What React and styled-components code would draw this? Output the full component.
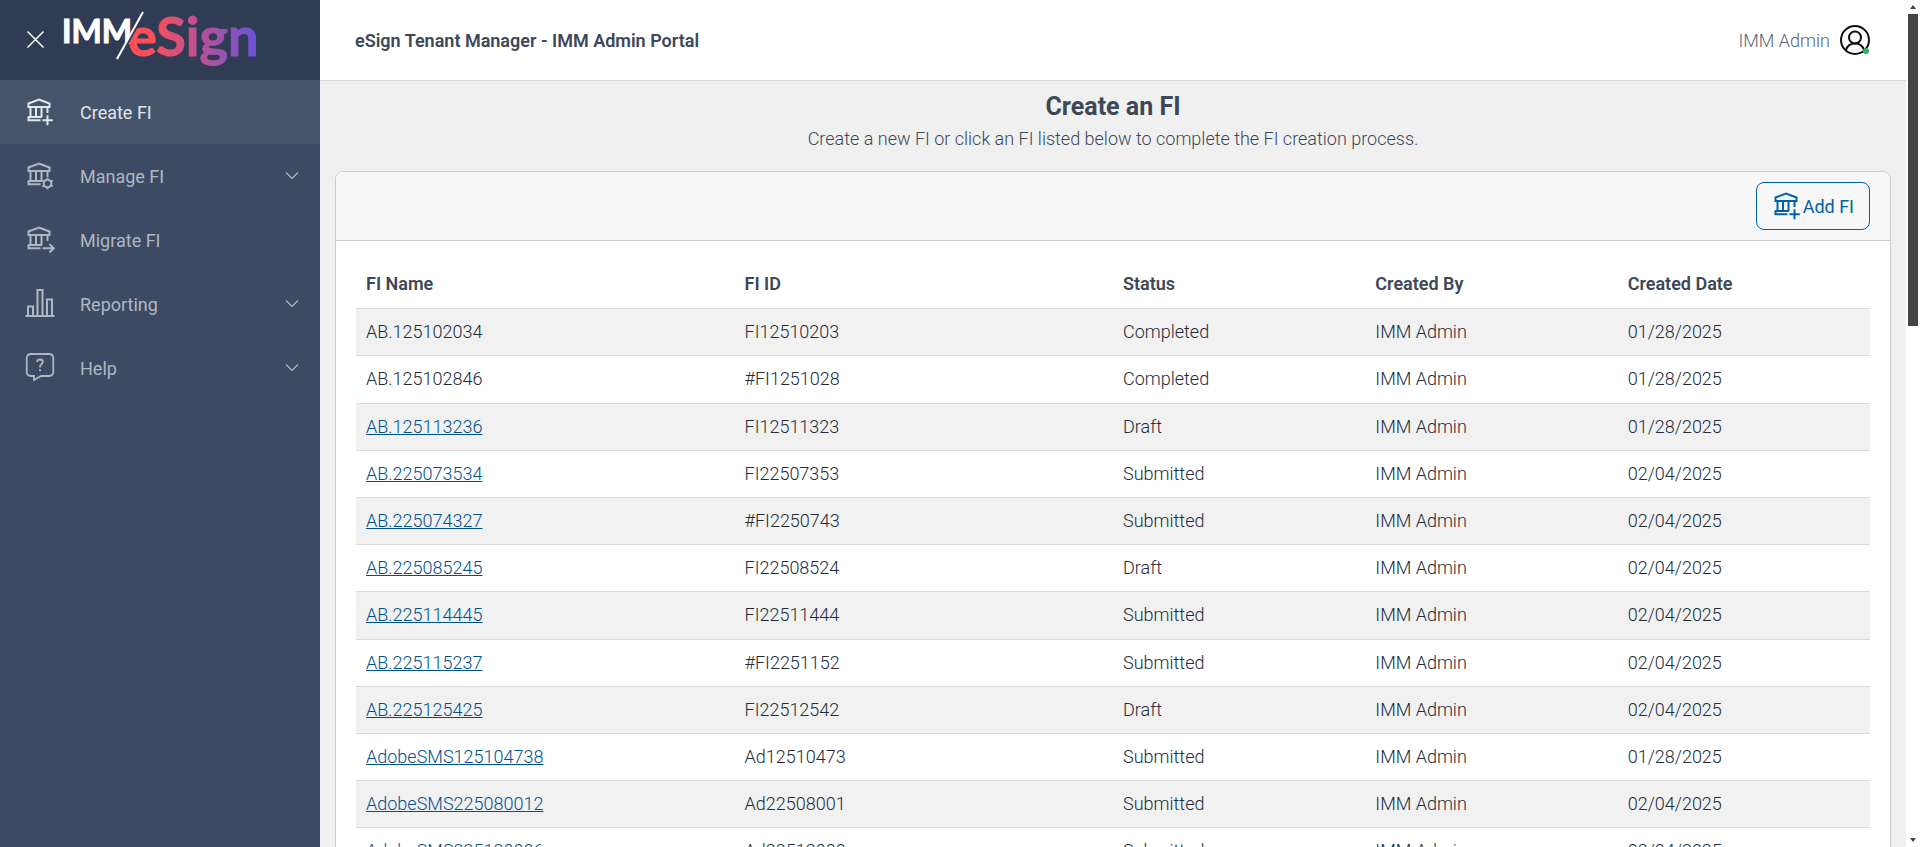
import React from 'react';
import styled, { createGlobalStyle } from 'styled-components';

const GlobalStyle = createGlobalStyle`
  * {
    box-sizing: border-box;
  }

  body {
    margin: 0;
    font-family: Roboto, sans-serif;
    font-size: 18px;
    color: #3c4858;
    background: #f0f0f0;
    overflow: hidden;
  }
`;

const Layout = styled.div`
  display: flex;
  height: 100vh;
  overflow: hidden;
`;

const Sidebar = styled.aside`
  flex: none;
  width: 320px;
  background: #3c4b63;
`;

const Brand = styled.div`
  display: flex;
  align-items: center;
  height: 80px;
  padding-left: 26px;
  background: #303c54;
`;

const CloseButton = styled.button`
  display: flex;
  padding: 0;
  border: none;
  background: none;
`;

const LogoSvg = styled.svg`
  margin-left: 16px;
`;

const LogoText = styled.text`
  font-family: Lato, sans-serif;
  font-weight: 700;
  stroke-width: 1;
`;

const NavItem = styled.a`
  display: flex;
  align-items: center;
  height: 64px;
  padding: 0 20px 0 24px;
  color: ${(props) => (props.$active ? '#e3e6ea' : '#b1b7c1')};
  background: ${(props) => (props.$active ? '#46546b' : 'transparent')};
  text-decoration: none;
`;

const NavLabel = styled.span`
  flex: 1;
  margin-left: 24px;
`;

const Main = styled.main`
  flex: 1;
  min-width: 0;
  overflow: hidden;
`;

const Header = styled.header`
  display: flex;
  align-items: center;
  justify-content: space-between;
  height: 81px;
  padding: 0 35px;
  background: #ffffff;
  border-bottom: 1px solid #d8dbe0;
`;

const HeaderTitle = styled.div`
  font-weight: 600;
`;

const UserButton = styled.button`
  display: flex;
  align-items: center;
  gap: 9px;
  padding: 0;
  border: none;
  background: none;
  font-family: inherit;
  font-size: 18px;
  font-weight: 300;
  color: #5c6675;
`;

const Intro = styled.div`
  padding: 10px 16px 18px;
  text-align: center;
`;

const PageTitle = styled.h1`
  margin: 0;
  font-size: 25px;
  line-height: 32px;
  font-weight: 700;
`;

const Subtitle = styled.p`
  margin: 2px 0 0;
  font-size: 18px;
  line-height: 28px;
  font-weight: 300;
`;

const Card = styled.section`
  margin: 0 15px;
  background: #ffffff;
  border: 1px solid #cccccc;
  border-radius: 8px;
  overflow: hidden;
`;

const CardHeader = styled.div`
  display: flex;
  justify-content: flex-end;
  padding: 10px 20px;
  background: #f7f7f7;
  border-bottom: 1px solid #cccccc;
`;

const AddButton = styled.button`
  display: flex;
  align-items: center;
  height: 48px;
  padding: 0 15px 0 14px;
  border: 1px solid #0061aa;
  border-radius: 8px;
  background: transparent;
  font-family: inherit;
  font-size: 18px;
  color: #0061aa;
`;

const CardBody = styled.div`
  padding: 20px;
`;

const Table = styled.table`
  width: 100%;
  border-collapse: collapse;
  table-layout: fixed;
  line-height: 1.455;
`;

const Th = styled.th`
  width: ${(props) => props.$width};
  padding: 10px 10px 11px;
  text-align: left;
  font-weight: 600;
`;

const Tr = styled.tr`
  border-top: 1px solid #d8dbe0;

  &:nth-child(odd) {
    background: #f1f1f1;
  }
`;

const Td = styled.td`
  padding: 10px;
  font-weight: 300;
  color: #222c3a;
`;

const FiLink = styled.a`
  color: #00508f;
  text-decoration: underline;
`;

const Scrollbar = styled.div`
  display: flex;
  flex-direction: column;
  align-items: center;
  justify-content: space-between;
  flex: none;
  width: 14px;
  padding: 5px 2px;
  background: #ffffff;
`;

const Thumb = styled.div`
  width: 10px;
  height: 312px;
  margin: 5px 0 auto;
  background: #444444;
`;

const Arrow = styled.div`
  border: 3px solid transparent;
  border-top: ${(props) => (props.$down ? '4px solid #444444' : '0')};
  border-bottom: ${(props) => (props.$down ? '0' : '4px solid #444444')};
`;

const columns = [
  ['FI Name', '25%'],
  ['FI ID', '25%'],
  ['Status', 'auto'],
  ['Created By', 'auto'],
  ['Created Date', 'auto'],
];

const rows = [
  ['AB.125102034', 'FI12510203', 'Completed', '01/28/2025'],
  ['AB.125102846', '#FI1251028', 'Completed', '01/28/2025'],
  ['AB.125113236', 'FI12511323', 'Draft', '01/28/2025'],
  ['AB.225073534', 'FI22507353', 'Submitted', '02/04/2025'],
  ['AB.225074327', '#FI2250743', 'Submitted', '02/04/2025'],
  ['AB.225085245', 'FI22508524', 'Draft', '02/04/2025'],
  ['AB.225114445', 'FI22511444', 'Submitted', '02/04/2025'],
  ['AB.225115237', '#FI2251152', 'Submitted', '02/04/2025'],
  ['AB.225125425', 'FI22512542', 'Draft', '02/04/2025'],
  ['AdobeSMS125104738', 'Ad12510473', 'Submitted', '01/28/2025'],
  ['AdobeSMS225080012', 'Ad22508001', 'Submitted', '02/04/2025'],
  ['AdobeSMS225120006', 'Ad22512000', 'Submitted', '02/04/2025'],
];

const Bank = ({ children }) => (
  <svg width="32" height="32" viewBox="0 0 32 32" fill="none" stroke="currentColor" strokeWidth="2">
    <path d="M4.500 11V7.500L15 3.500 25.500 7.500V11ZM6.500 11V21M12 11V21M17.500 11V21M23.500 11V17M4.500 21H18M16.500 24.300H4.500V20.200" />
    {children}
  </svg>
);

const CreateIcon = () => (
  <Bank>
    <path d="M23.500 19.300V29.300M18.500 24.300H28.700" />
  </Bank>
);

const ManageIcon = () => (
  <Bank>
    <circle cx="23.500" cy="23.500" r="3.800" />
    <path d="M23.500 17.800V20M23.500 27V29.200M18.300 20.500 20.500 21.800M26.500 25.200 28.700 26.500M18.300 26.500 20.500 25.200M26.500 21.800 28.700 20.500" />
  </Bank>
);

const MigrateIcon = () => (
  <Bank>
    <path d="M18.500 24.300H29.700M25.500 20.100 29.700 24.300 25.500 28.500" />
  </Bank>
);

const ReportingIcon = () => (
  <svg width="32" height="32" viewBox="0 0 32 32" fill="none" stroke="currentColor" strokeWidth="2">
    <path d="M1.500 28H30.500M4 28V18.500H9V28M13.500 28V2H18.500V28M23 28V11.500H28V28" />
  </svg>
);

const HelpIcon = () => (
  <svg width="32" height="32" viewBox="0 0 32 32" fill="none" stroke="currentColor" strokeWidth="1.8">
    <path d="M7 2H25Q29.300 2 29.300 6.500V19.500Q29.300 24 25 24H17L10 28V24H7Q2.700 24 2.700 19.500V6.500Q2.700 2 7 2Z" />
    <path d="M13.200 10V9.500Q13.500 7.500 16 7.500 18.800 7.500 18.800 10 18.800 11.300 17.300 12.300 16 13.200 16 15.500M16 17.300V19.300" />
  </svg>
);

const Chevron = () => (
  <svg width="16" height="10" viewBox="0 0 16 10" fill="none" stroke="currentColor" strokeWidth="1.2">
    <path d="M2 1.500 8 7.500 14 1.500" />
  </svg>
);

const UserIcon = () => (
  <svg width="32" height="32" viewBox="0 0 32 32" fill="none" stroke="#111111" strokeWidth="2">
    <circle cx="16" cy="16" r="14" />
    <circle cx="16" cy="13.500" r="6" />
    <path d="M7 26Q9 19.500 16 19.500T25 26" />
    <circle cx="27" cy="27" r="3" fill="#2eb85c" stroke="none" />
  </svg>
);

const Logo = () => (
  <LogoSvg width="210" height="80" viewBox="0 0 210 80" role="img" aria-label="IMM eSign">
    <defs>
      <linearGradient id="brand" gradientUnits="userSpaceOnUse" x1="68" y1="0" x2="194" y2="0">
        <stop offset="0" stopColor="#ff4f56" />
        <stop offset="0.2" stopColor="#f94f5c" />
        <stop offset="0.5" stopColor="#c4508c" />
        <stop offset="1" stopColor="#6a54d8" />
      </linearGradient>
    </defs>
    <LogoText x="0" y="43" fontSize="32" fill="#ffffff" stroke="#ffffff">IMM</LogoText>
    <LogoText x="66" y="56" fontSize="54" fill="url(#brand)" stroke="url(#brand)" strokeWidth="1">eSign</LogoText>
    <path d="M56.500 59 82.500 12" stroke="#303c54" strokeWidth="3" />
    <path d="M55 59 81 12" stroke="#ffffff" strokeWidth="2" />
  </LogoSvg>
);

const navItems = [
  { label: 'Create FI', icon: <CreateIcon />, active: true },
  { label: 'Manage FI', icon: <ManageIcon />, expandable: true },
  { label: 'Migrate FI', icon: <MigrateIcon /> },
  { label: 'Reporting', icon: <ReportingIcon />, expandable: true },
  { label: 'Help', icon: <HelpIcon />, expandable: true },
];

const App = () => {
  return (
    <Layout>
      <GlobalStyle />
      <Sidebar>
        <Brand>
          <CloseButton aria-label="Close menu">
            <svg width="20" height="20" viewBox="0 0 20 20" stroke="#ffffff" strokeWidth="1.500">
              <path d="M1.500 1.500 17.500 17.500M17.500 1.500 1.500 17.500" />
            </svg>
          </CloseButton>
          <Logo />
        </Brand>
        <nav>
          {navItems.map((item) => (
            <NavItem key={item.label} href="#" $active={item.active}>
              {item.icon}
              <NavLabel>{item.label}</NavLabel>
              {item.expandable && <Chevron />}
            </NavItem>
          ))}
        </nav>
      </Sidebar>
      <Main>
        <Header>
          <HeaderTitle>eSign Tenant Manager - IMM Admin Portal</HeaderTitle>
          <UserButton>
            IMM Admin
            <UserIcon />
          </UserButton>
        </Header>
        <Intro>
          <PageTitle>Create an FI</PageTitle>
          <Subtitle>Create a new FI or click an FI listed below to complete the FI creation process.</Subtitle>
        </Intro>
        <Card>
          <CardHeader>
            <AddButton>
              <CreateIcon />
              Add FI
            </AddButton>
          </CardHeader>
          <CardBody>
            <Table>
              <thead>
                <tr>
                  {columns.map(([name, width]) => (
                    <Th key={name} $width={width}>{name}</Th>
                  ))}
                </tr>
              </thead>
              <tbody>
                {rows.map(([name, id, status, date], index) => (
                  <Tr key={name}>
                    <Td>{index < 2 ? name : <FiLink href="#">{name}</FiLink>}</Td>
                    <Td>{id}</Td>
                    <Td>{status}</Td>
                    <Td>IMM Admin</Td>
                    <Td>{date}</Td>
                  </Tr>
                ))}
              </tbody>
            </Table>
          </CardBody>
        </Card>
      </Main>
      <Scrollbar>
        <Arrow />
        <Thumb />
        <Arrow $down />
      </Scrollbar>
    </Layout>
  );
};

export default App;
